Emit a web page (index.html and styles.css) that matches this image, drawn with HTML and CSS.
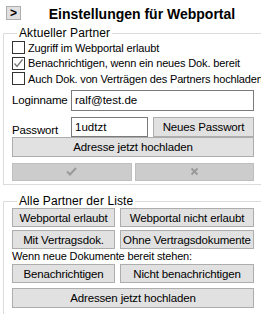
FILE: index.html
```html
<!DOCTYPE html>
<html lang="de">
<head>
    <meta charset="UTF-8">
    <title>Einstellungen für Webportal</title>
    <link rel="stylesheet" href="styles.css">
</head>
<body>
    <div class="header">
        <button class="toggle">&gt;</button>
        <h2>Einstellungen für Webportal</h2>
    </div>
    <fieldset class="group first">
        <legend>Aktueller Partner</legend>
        <label class="check"><span class="box"></span>Zugriff im Webportal erlaubt</label>
        <label class="check"><span class="box checked">
            <svg width="11" height="11" viewBox="0 0 11 11"><path d="M1.5 5.5 L4 8.5 L9.5 1.5" fill="none" stroke="#777" stroke-width="1.3"/></svg>
        </span>Benachrichtigen, wenn ein neues Dok. bereit</label>
        <label class="check"><span class="box"></span>Auch Dok. von Verträgen des Partners hochladen</label>
        <div class="field login">
            <span class="field-label">Loginname</span>
            <input type="text" class="text wide" value="ralf@test.de">
        </div>
        <div class="field pass">
            <span class="field-label">Passwort</span>
            <input type="text" class="text short" value="1udtzt">
            <button class="btn grow">Neues Passwort</button>
        </div>
        <button class="btn full">Adresse jetzt hochladen</button>
        <div class="row confirm">
            <button class="btn disabled">
                <svg width="11" height="9" viewBox="0 0 11 9"><path d="M1 4.5 L4 7.5 L10 1" fill="none" stroke="#9a9a9a" stroke-width="2"/></svg>
            </button>
            <button class="btn disabled">
                <svg width="9" height="9" viewBox="0 0 9 9"><path d="M1.5 1.5 L7.5 7.5 M7.5 1.5 L1.5 7.5" fill="none" stroke="#9a9a9a" stroke-width="2"/></svg>
            </button>
        </div>
    </fieldset>
    <fieldset class="group second">
        <legend>Alle Partner der Liste</legend>
        <div class="row top">
            <button class="btn left">Webportal erlaubt</button>
            <button class="btn grow">Webportal nicht erlaubt</button>
        </div>
        <div class="row">
            <button class="btn left">Mit Vertragsdok.</button>
            <button class="btn grow">Ohne Vertragsdokumente</button>
        </div>
        <div class="note">Wenn neue Dokumente bereit stehen:</div>
        <div class="row top">
            <button class="btn left">Benachrichtigen</button>
            <button class="btn grow">Nicht benachrichtigen</button>
        </div>
        <button class="btn full last">Adressen jetzt hochladen</button>
    </fieldset>
</body>
</html>
```

FILE: styles.css
```css
body {
    font-family: "Liberation Sans", Arial, sans-serif;
    font-size: 11px;
    letter-spacing: -0.15px;
    color: #000;
    background: #fff;
    margin: 0;
    width: 261px;
    height: 314px;
    overflow: hidden;
}
.header {
    display: flex;
    align-items: center;
    height: 26px;
    padding: 0 6px;
}
.toggle {
    width: 15px;
    height: 14px;
    padding: 0;
    margin: 0;
    border: 1px solid #adadad;
    background: #e1e1e1;
    font: bold 12px "Liberation Sans", Arial, sans-serif;
    line-height: 12px;
}
.header h2 {
    flex: 1;
    margin: 0;
    text-align: center;
    font-size: 14px;
    font-weight: bold;
    letter-spacing: 0;
    padding-left: 8px;
    padding-top: 2px;
}
.group {
    margin: 0 0 0 3px;
    width: 270px;
    padding: 0 0 0 8px;
    border: 1px solid #dcdcdc;
    box-sizing: border-box;
}
.group legend {
    padding: 0 2px;
    margin-left: 5px;
    font-size: 12px;
    line-height: 14px;
    letter-spacing: 0.1px;
}
.first {
    height: 159px;
}
.second {
    margin-top: 9px;
    height: 130px;
}
.check {
    display: flex;
    align-items: center;
    height: 15.5px;
    white-space: nowrap;
}
.box {
    width: 11px;
    height: 11px;
    border: 1px solid #333;
    background: #fff;
    margin-right: 3px;
    display: flex;
    align-items: center;
    justify-content: center;
}
.field {
    display: flex;
    align-items: center;
    width: 242px;
}
.login {
    margin-top: 3px;
    height: 21px;
}
.pass {
    margin-top: 7px;
    height: 19px;
}
.field-label {
    width: 59px;
    font-size: 11.5px;
}
.pass .field-label {
    padding-top: 5px;
}
.text {
    height: 21px;
    box-sizing: border-box;
    border: 1px solid #7a7a7a;
    padding: 0 3px;
    margin: 0;
    font: 11.5px "Liberation Sans", Arial, sans-serif;
    outline: none;
}
.pass .text {
    height: 20px;
}
.wide {
    width: 183px;
}
.short {
    width: 77px;
}
.btn {
    height: 19px;
    box-sizing: border-box;
    border: 1px solid #adadad;
    background: #e1e1e1;
    font: 11.5px "Liberation Sans", Arial, sans-serif;
    letter-spacing: -0.15px;
    padding: 0;
    margin: 0;
    white-space: nowrap;
    display: flex;
    align-items: center;
    justify-content: center;
}
.pass .btn {
    height: 20px;
    margin-left: 5px;
}
.grow {
    flex: 1;
}
.full {
    width: 242px;
}
.first .full {
    height: 20px;
}
.row {
    display: flex;
    gap: 5px;
    width: 242px;
    margin-top: 3px;
}
.row.top {
    margin-top: 0;
}
.confirm {
    gap: 3px;
    margin-top: 6px;
}
.confirm .btn {
    flex: 1;
    height: 18px;
}
.disabled {
    background: #cccccc;
    border-color: #bfbfbf;
}
.left {
    width: 103px;
}
.note {
    height: 15px;
    line-height: 15px;
}
.last {
    margin-top: 5px;
    height: 20px;
}
```
